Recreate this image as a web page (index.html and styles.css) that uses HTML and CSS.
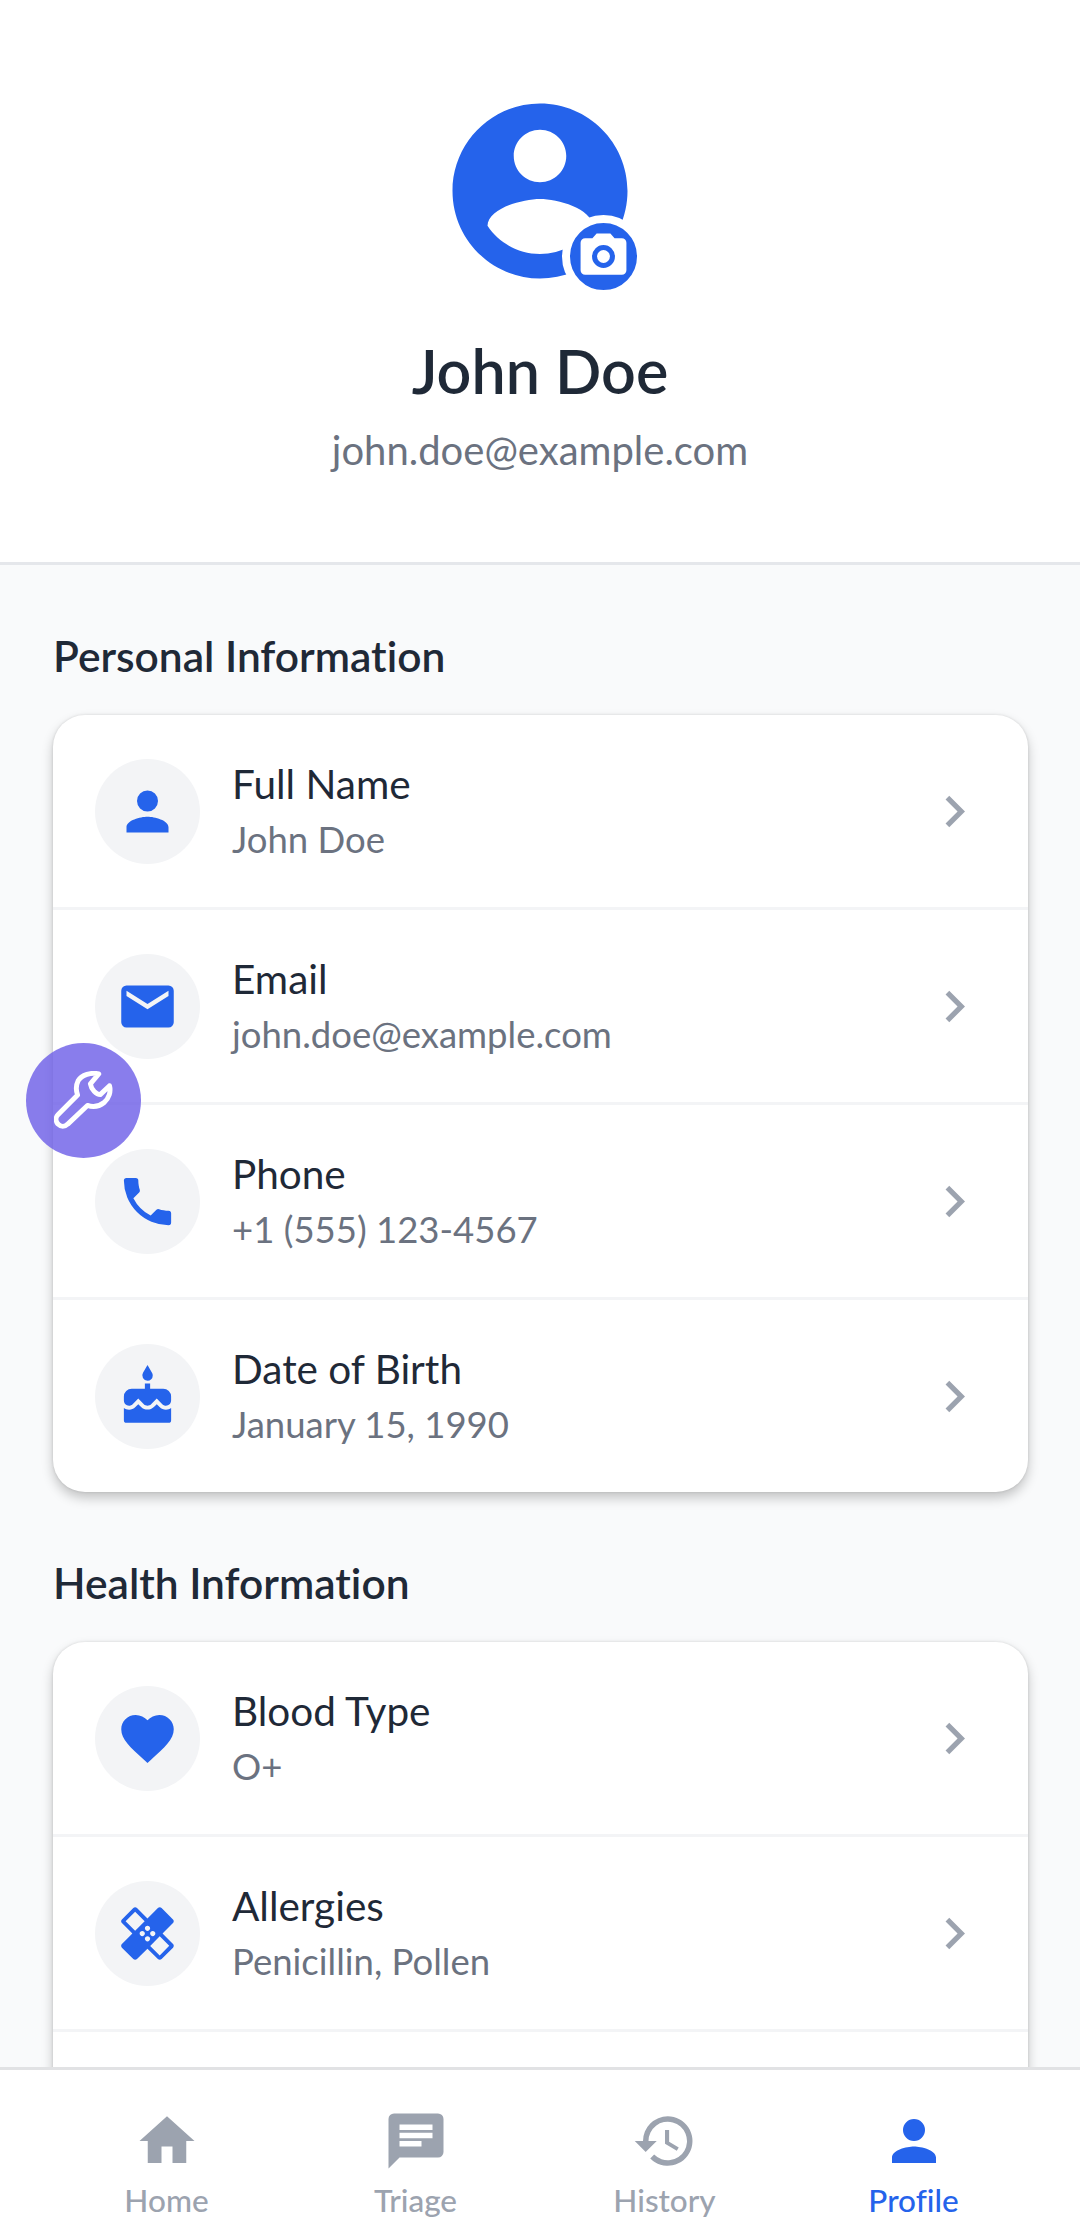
FILE: index.html
```html
<!DOCTYPE html>
<html>
    <head>
        <title>Profile</title>
        <link rel="stylesheet" href="styles.css">
    </head>
    <body>
        <div class="screen">
            <div class="scroll">
                <div class="profile-head">
                    <div class="avatar">
                        <svg class="avatar-img" viewBox="0 0 24 24"><path d="M12 2C6.48 2 2 6.48 2 12s4.48 10 10 10 10-4.48 10-10S17.52 2 12 2zm0 3c1.66 0 3 1.34 3 3s-1.34 3-3 3-3-1.34-3-3 1.34-3 3-3zm0 14.2c-2.5 0-4.71-1.28-6-3.22.03-1.99 4-3.08 6-3.08 1.99 0 5.97 1.09 6 3.08-1.29 1.94-3.5 3.22-6 3.22z"/></svg>
                        <span class="camera">
                            <svg viewBox="0 0 24 24"><path d="M9 2 7.17 4H4a2 2 0 0 0-2 2v12a2 2 0 0 0 2 2h16a2 2 0 0 0 2-2V6a2 2 0 0 0-2-2h-3.17L15 2H9zm3 15a5 5 0 1 1 0-10 5 5 0 0 1 0 10z"/><circle cx="12" cy="12" r="2.8"/></svg>
                        </span>
                    </div>
                    <h1 class="name">John Doe</h1>
                    <p class="email">john.doe@example.com</p>
                </div>

                <div class="section">
                    <h2 class="section-title">Personal Information</h2>
                    <div class="card">
                        <div class="row">
                            <span class="row-icon"><svg viewBox="0 0 24 24"><path d="M12 12a4 4 0 1 0 0-8 4 4 0 0 0 0 8zm0 2c-2.67 0-8 1.34-8 4v2h16v-2c0-2.66-5.33-4-8-4z"/></svg></span>
                            <div class="row-text"><div class="row-label">Full Name</div><div class="row-value">John Doe</div></div>
                            <svg class="chevron" viewBox="0 0 24 24"><path d="M10 6 8.59 7.41 13.17 12l-4.58 4.59L10 18l6-6z"/></svg>
                        </div>
                        <div class="row">
                            <span class="row-icon"><svg viewBox="0 0 24 24"><path d="M20 4H4a2 2 0 0 0-2 2v12a2 2 0 0 0 2 2h16a2 2 0 0 0 2-2V6a2 2 0 0 0-2-2zm0 4-8 5-8-5V6l8 5 8-5v2z"/></svg></span>
                            <div class="row-text"><div class="row-label">Email</div><div class="row-value">john.doe@example.com</div></div>
                            <svg class="chevron" viewBox="0 0 24 24"><path d="M10 6 8.59 7.41 13.17 12l-4.58 4.59L10 18l6-6z"/></svg>
                        </div>
                        <div class="row">
                            <span class="row-icon"><svg viewBox="0 0 24 24"><path d="M6.62 10.79a15.05 15.05 0 0 0 6.59 6.59l2.2-2.2a1 1 0 0 1 1.02-.24c1.12.37 2.33.57 3.57.57a1 1 0 0 1 1 1V20a1 1 0 0 1-1 1A17 17 0 0 1 3 4a1 1 0 0 1 1-1h3.5a1 1 0 0 1 1 1c0 1.25.2 2.45.57 3.57a1 1 0 0 1-.25 1.02l-2.2 2.2z"/></svg></span>
                            <div class="row-text"><div class="row-label">Phone</div><div class="row-value">+1 (555) 123-4567</div></div>
                            <svg class="chevron" viewBox="0 0 24 24"><path d="M10 6 8.59 7.41 13.17 12l-4.58 4.59L10 18l6-6z"/></svg>
                        </div>
                        <div class="row">
                            <span class="row-icon"><svg viewBox="0 0 24 24"><path d="M12 6a2 2 0 0 0 2-2c0-.38-.1-.73-.29-1.03L12 0l-1.71 2.97A2 2 0 0 0 12 6zm4.6 9.99-1.07-1.07-1.08 1.07c-1.3 1.3-3.58 1.31-4.89 0l-1.07-1.07-1.09 1.07C6.75 16.64 5.88 17 4.96 17c-.73 0-1.4-.23-1.96-.61V21a1 1 0 0 0 1 1h16a1 1 0 0 0 1-1v-4.61c-.56.38-1.23.61-1.96.61-.92 0-1.79-.36-2.44-1.01zM18 9h-5V7h-2v2H6a3 3 0 0 0-3 3v1.54c0 1.08.88 1.96 1.96 1.96.52 0 1.02-.2 1.38-.57l2.14-2.13 2.13 2.13c.74.74 2.03.74 2.77 0l2.14-2.13 2.13 2.13c.37.37.86.57 1.38.57 1.08 0 1.96-.88 1.96-1.96V12A3 3 0 0 0 18 9z"/></svg></span>
                            <div class="row-text"><div class="row-label">Date of Birth</div><div class="row-value">January 15, 1990</div></div>
                            <svg class="chevron" viewBox="0 0 24 24"><path d="M10 6 8.59 7.41 13.17 12l-4.58 4.59L10 18l6-6z"/></svg>
                        </div>
                    </div>
                </div>

                <div class="section">
                    <h2 class="section-title">Health Information</h2>
                    <div class="card">
                        <div class="row">
                            <span class="row-icon"><svg viewBox="0 0 24 24"><path d="m12 21.35-1.45-1.32C5.4 15.36 2 12.28 2 8.5 2 5.42 4.42 3 7.5 3c1.74 0 3.41.81 4.5 2.09C13.09 3.81 14.76 3 16.5 3 19.58 3 22 5.42 22 8.5c0 3.78-3.4 6.86-8.55 11.54L12 21.35z"/></svg></span>
                            <div class="row-text"><div class="row-label">Blood Type</div><div class="row-value">O+</div></div>
                            <svg class="chevron" viewBox="0 0 24 24"><path d="M10 6 8.59 7.41 13.17 12l-4.58 4.59L10 18l6-6z"/></svg>
                        </div>
                        <div class="row">
                            <span class="row-icon"><svg viewBox="0 0 24 24"><path d="M17.73 12.02l3.98-3.98c.39-.39.39-1.02 0-1.41l-4.34-4.34c-.39-.39-1.02-.39-1.41 0l-3.98 3.98L8 2.29C7.8 2.1 7.55 2 7.29 2c-.25 0-.51.1-.7.29L2.25 6.63c-.39.39-.39 1.02 0 1.41l3.98 3.98L2.25 16c-.39.39-.39 1.02 0 1.41l4.34 4.34c.39.39 1.02.39 1.41 0l3.98-3.98 3.98 3.98c.2.2.45.29.71.29.26 0 .51-.1.71-.29l4.34-4.34c.39-.39.39-1.02 0-1.41l-3.98-3.98zM12 9c.55 0 1 .45 1 1s-.45 1-1 1-1-.45-1-1 .45-1 1-1zm-4.71 1.96L3.66 7.34l3.63-3.63 3.62 3.62-3.62 3.63zM10 13c-.55 0-1-.45-1-1s.45-1 1-1 1 .45 1 1-.45 1-1 1zm2 2c-.55 0-1-.45-1-1s.45-1 1-1 1 .45 1 1-.45 1-1 1zm2-4c.55 0 1 .45 1 1s-.45 1-1 1-1-.45-1-1 .45-1 1-1zm2.66 9.34l-3.63-3.62 3.63-3.63 3.62 3.62-3.62 3.63z"/></svg></span>
                            <div class="row-text"><div class="row-label">Allergies</div><div class="row-value">Penicillin, Pollen</div></div>
                            <svg class="chevron" viewBox="0 0 24 24"><path d="M10 6 8.59 7.41 13.17 12l-4.58 4.59L10 18l6-6z"/></svg>
                        </div>
                        <div class="row"></div>
                    </div>
                </div>
            </div>

            <button class="fab">
                <svg viewBox="0 0 60 60"><path d="M45.5 3C38 1 28 4 24.5 10c-2.500 5-2.500 9-.5 14.500L4 44.500c-2.500 2.500-2.500 6.500 0 9.500 3 3 7 3 10 0l20-19c6 2 12 1 17-3s7-11 5.500-17L47 24c-4 0-9-5-10-11l8.500-10z"/></svg>
            </button>

            <nav class="tabbar">
                <div class="tab">
                    <svg viewBox="0 0 24 24"><path d="M10 20v-6h4v6h5v-8h3L12 3 2 12h3v8z"/></svg>
                    <span>Home</span>
                </div>
                <div class="tab">
                    <svg viewBox="0 0 24 24"><path d="M20 2H4a2 2 0 0 0-2 2v18l4-4h14a2 2 0 0 0 2-2V4a2 2 0 0 0-2-2zM6 9h12v2H6V9zm8 5H6v-2h8v2zm4-6H6V6h12v2z"/></svg>
                    <span>Triage</span>
                </div>
                <div class="tab">
                    <svg viewBox="0 0 24 24"><path d="M13 3a9 9 0 0 0-9 9H1l3.890 3.890.07.14L9 12H6a7 7 0 1 1 2.050 4.950l-1.420 1.420A9 9 0 1 0 13 3zm-1 5v5l4.280 2.540.72-1.210-3.500-2.080V8H12z"/></svg>
                    <span>History</span>
                </div>
                <div class="tab active">
                    <svg viewBox="0 0 24 24"><path d="M12 12a4 4 0 1 0 0-8 4 4 0 0 0 0 8zm0 2c-2.67 0-8 1.34-8 4v2h16v-2c0-2.66-5.33-4-8-4z"/></svg>
                    <span>Profile</span>
                </div>
            </nav>
        </div>
    </body>
</html>
```

FILE: styles.css
```css
html, body {
    margin: 0;
    height: 100%;
}
body {
    font-family: "Lato", "Noto Sans", sans-serif;
    font-variant-ligatures: none;
    background: #f9fafb;
}
.screen {
    position: relative;
    height: 2224px;
    display: flex;
    flex-direction: column;
    overflow: hidden;
}
.scroll {
    flex: 1;
    min-height: 0;
    overflow: hidden;
}
.profile-head {
    height: 565px;
    box-sizing: border-box;
    padding-top: 86px;
    background: #fff;
    border-bottom: 3px solid #e5e7eb;
    display: flex;
    flex-direction: column;
    align-items: center;
}
.avatar {
    position: relative;
    width: 210px;
    height: 210px;
}
.avatar-img {
    display: block;
    width: 210px;
    height: 210px;
    fill: #2563eb;
}
.camera {
    position: absolute;
    right: 0;
    bottom: -2px;
    width: 67px;
    height: 67px;
    border: 8px solid #fff;
    border-radius: 50%;
    background: #2563eb;
    display: flex;
    align-items: center;
    justify-content: center;
}
.camera svg {
    width: 55px;
    height: 55px;
    fill: #fff;
}
.name {
    margin: 35px 0 0;
    font-size: 61px;
    line-height: 80px;
    font-weight: 600;
    color: #1f2937;
}
.email {
    margin: 12px 0 0;
    font-size: 40px;
    line-height: 54px;
    color: #6b7280;
}
.section {
    padding: 0 52px 0 53px;
}
.section-title {
    margin: 0;
    padding-top: 64px;
    padding-bottom: 1px;
    font-size: 42.5px;
    line-height: 53px;
    font-weight: 600;
    color: #1f2937;
}
.card {
    margin-top: 32px;
    background: #fff;
    border-radius: 32px;
    box-shadow: 0 6px 12px rgba(0, 0, 0, 0.22), 0 0 3px rgba(0, 0, 0, 0.12);
}
.row {
    height: 195px;
    box-sizing: border-box;
    padding: 0 42px;
    display: flex;
    align-items: center;
    border-bottom: 3px solid #f3f4f6;
}
.row:last-child {
    height: 192px;
    border-bottom: 0;
}
.row-icon {
    width: 105px;
    height: 105px;
    border-radius: 50%;
    background: #f3f4f6;
    display: flex;
    align-items: center;
    justify-content: center;
    flex-shrink: 0;
}
.row-icon svg {
    width: 63px;
    height: 63px;
    fill: #2563eb;
}
.row-text {
    flex: 1;
    margin-left: 32px;
}
.row-label {
    font-size: 40.5px;
    line-height: 50px;
    color: #1f2937;
}
.row-value {
    margin-top: 5px;
    font-size: 36.5px;
    line-height: 50px;
    color: #6b7280;
}
.chevron {
    width: 63px;
    height: 63px;
    fill: #9ca3af;
    flex-shrink: 0;
}
.fab {
    position: absolute;
    left: 26px;
    top: 1043px;
    width: 115px;
    height: 115px;
    padding: 0;
    border: 0;
    border-radius: 50%;
    background: rgba(108, 92, 231, 0.8);
    display: flex;
    align-items: center;
    justify-content: center;
}
.fab svg {
    width: 59px;
    height: 59px;
    fill: none;
    stroke: #fff;
    stroke-width: 5;
    stroke-linejoin: round;
}
.tabbar {
    height: 157px;
    box-sizing: border-box;
    flex-shrink: 0;
    background: #fff;
    border-top: 3px solid #e1e2e4;
    display: flex;
    padding: 0 42px;
}
.tab {
    flex: 1;
    display: flex;
    flex-direction: column;
    align-items: center;
    padding-top: 38px;
    color: #9ca3af;
    font-size: 31.5px;
    line-height: 40px;
    font-weight: 500;
}
.tab svg {
    width: 66px;
    height: 66px;
    margin-bottom: 6px;
    fill: #9ca3af;
}
.tab.active {
    color: #2563eb;
}
.tab.active svg {
    fill: #2563eb;
}
```
